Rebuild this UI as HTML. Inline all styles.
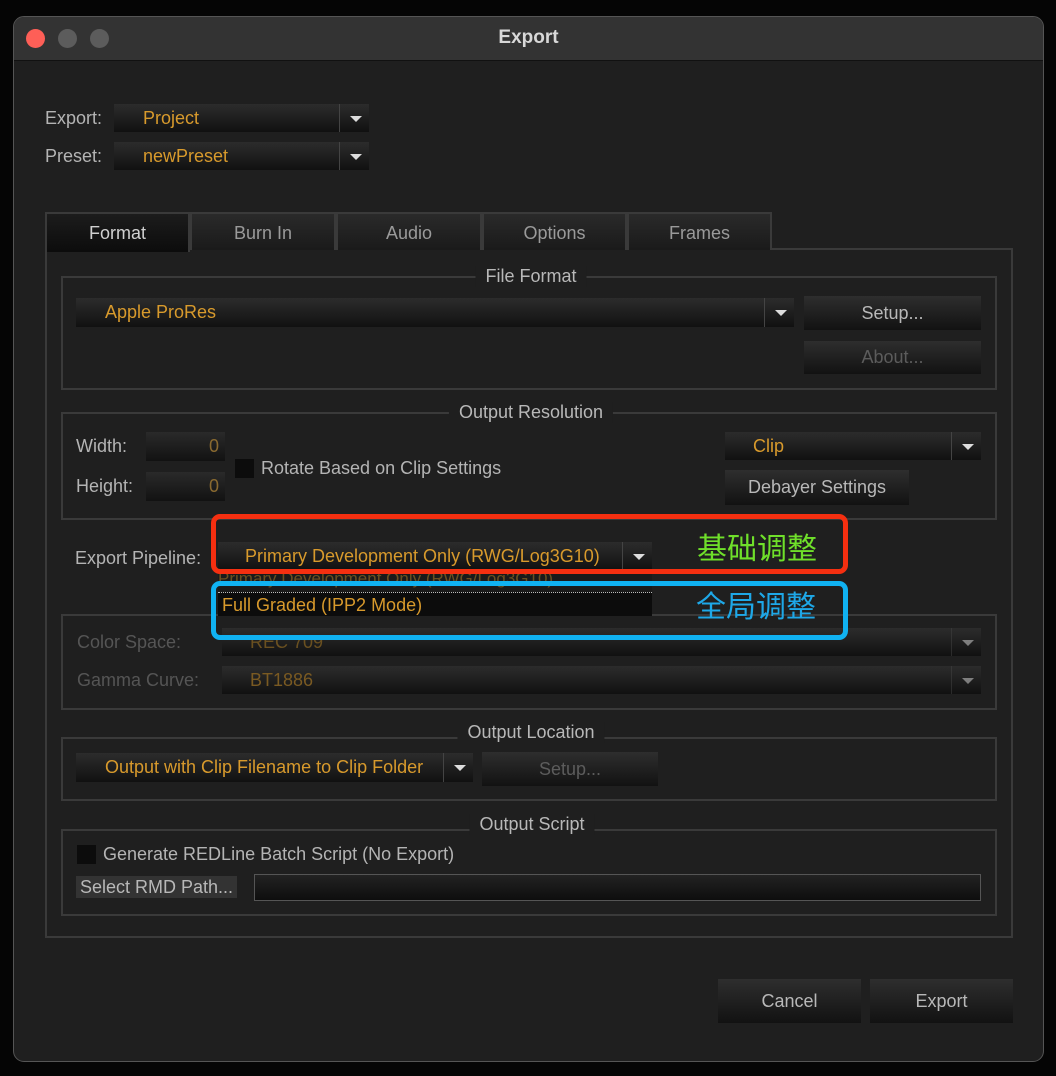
<!DOCTYPE html>
<html><head><meta charset="utf-8"><style>
*{box-sizing:border-box;margin:0;padding:0}
body{width:1056px;height:1076px;background:#050505;position:relative;overflow:hidden;font-family:"Liberation Sans","Noto Sans CJK SC",sans-serif;font-size:18px;color:#b4b4b4}
.a{position:absolute}
.win{left:13px;top:16px;width:1031px;height:1046px;background:#1f1f1f;border-radius:11px;border:1px solid #555;overflow:hidden}
.title{left:0;top:0;width:100%;height:44px;background:#333;border-bottom:1px solid #111;text-align:center;line-height:42px;font-weight:bold;color:#d8d8d8;font-size:19px}
.dot{width:19px;height:19px;border-radius:50%;top:12px}
.dd{background:linear-gradient(#2c2c2c,#111);color:#d89a2c;line-height:28px}
.dd .ar{position:absolute;right:0;top:0;bottom:0;width:30px;border-left:1px solid #444;background:linear-gradient(#2c2c2c,#111)}
.dd .ar:after{content:"";position:absolute;left:10px;top:12px;border-left:6px solid transparent;border-right:6px solid transparent;border-top:6px solid #ddd}
.btn{background:linear-gradient(#2e2e2e,#121212);color:#b8b8b8;text-align:center}
.grp{border:2px solid #3a3a3a}
.gt{background:#1f1f1f;padding:0 10px;color:#b8b8b8;transform:translateX(-50%)}
.tab{top:212px;height:38px;border:2px solid #3a3a3a;border-bottom:none;background:linear-gradient(#2a2a2a,#1a1a1a);text-align:center;line-height:38px;color:#9a9a9a}
.inp{background:linear-gradient(#2a2a2a,#121212);color:#8a6a30;text-align:right;padding-right:6px;line-height:29px}
.cb{background:#0c0c0c;width:19px;height:19px}
</style></head><body>
<div class="a win">
 <div class="a title">Export</div>
 <div class="a dot" style="left:12px;background:#fe5f57"></div>
 <div class="a dot" style="left:44px;background:#5c5c5c"></div>
 <div class="a dot" style="left:76px;background:#5c5c5c"></div>
</div>
<div class="a" style="left:45px;top:108px">Export:</div>
<div class="a dd" style="left:114px;top:104px;width:255px;height:28px;padding-left:29px">Project<div class="ar"></div></div>
<div class="a" style="left:45px;top:146px">Preset:</div>
<div class="a dd" style="left:114px;top:142px;width:255px;height:28px;padding-left:29px">newPreset<div class="ar"></div></div>

<div class="a grp" style="left:45px;top:248px;width:968px;height:690px"></div>
<div class="a tab" style="left:45px;width:145px;background:linear-gradient(#1c1c1c,#0c0c0c);color:#d0d0d0;height:40px">Format</div>
<div class="a tab" style="left:190px;width:146px">Burn In</div>
<div class="a tab" style="left:336px;width:146px">Audio</div>
<div class="a tab" style="left:482px;width:145px">Options</div>
<div class="a tab" style="left:627px;width:145px">Frames</div>

<div class="a grp" style="left:61px;top:276px;width:936px;height:114px"></div>
<div class="a gt" style="left:531px;top:266px">File Format</div>
<div class="a dd" style="left:76px;top:298px;width:718px;height:29px;padding-left:29px">Apple ProRes<div class="ar"></div></div>
<div class="a btn" style="left:804px;top:296px;width:177px;height:34px;line-height:34px">Setup...</div>
<div class="a btn" style="left:804px;top:341px;width:177px;height:33px;line-height:33px;color:#5c5c5c">About...</div>

<div class="a grp" style="left:61px;top:412px;width:936px;height:108px"></div>
<div class="a gt" style="left:531px;top:402px">Output Resolution</div>
<div class="a" style="left:76px;top:436px">Width:</div>
<div class="a inp" style="left:146px;top:432px;width:79px;height:29px">0</div>
<div class="a" style="left:76px;top:476px">Height:</div>
<div class="a inp" style="left:146px;top:472px;width:79px;height:29px">0</div>
<div class="a cb" style="left:235px;top:459px"></div>
<div class="a" style="left:261px;top:458px">Rotate Based on Clip Settings</div>
<div class="a dd" style="left:725px;top:432px;width:256px;height:28px;padding-left:28px">Clip<div class="ar"></div></div>
<div class="a btn" style="left:725px;top:470px;width:184px;height:35px;line-height:35px">Debayer Settings</div>

<div class="a grp" style="left:61px;top:614px;width:936px;height:96px"></div>
<div class="a" style="left:77px;top:632px;color:#555">Color Space:</div>
<div class="a dd" style="left:222px;top:628px;width:759px;height:28px;padding-left:28px;color:#6a5020">REC 709<div class="ar" style="opacity:.5"></div></div>
<div class="a" style="left:77px;top:670px;color:#555">Gamma Curve:</div>
<div class="a dd" style="left:222px;top:666px;width:759px;height:28px;padding-left:28px;color:#7a5a22">BT1886<div class="ar" style="opacity:.5"></div></div>

<div class="a" style="left:75px;top:548px">Export Pipeline:</div>
<div class="a" style="left:218px;top:570px;width:434px;height:46px;background:#1a1a1a;border-bottom:1px solid #333"></div>
<div class="a" style="left:218px;top:574px;width:434px;height:16px;overflow:hidden;color:#6a5020;line-height:10px;font-size:17px">Primary Development Only (RWG/Log3G10)</div>
<div class="a" style="left:218px;top:592px;width:434px;height:24px;background:#0c0c0c;color:#d89a2c;line-height:24px;padding-left:4px;border-top:1px dotted #bbb">Full Graded (IPP2 Mode)</div>
<div class="a dd" style="left:218px;top:542px;width:434px;height:28px;padding-left:27px">Primary Development Only (RWG/Log3G10)<div class="ar"></div></div>

<div class="a" style="left:211px;top:514px;width:637px;height:60px;border:5px solid #f52f10;border-radius:9px"></div>
<div class="a" style="left:697px;top:532px;color:#6fe02a;font-size:30px;line-height:36px">基础调整</div>
<div class="a" style="left:211px;top:581px;width:637px;height:59px;border:5px solid #10b2f2;border-radius:9px"></div>
<div class="a" style="left:696px;top:590px;color:#1ea8e8;font-size:30px;line-height:36px">全局调整</div>

<div class="a grp" style="left:61px;top:737px;width:936px;height:64px"></div>
<div class="a gt" style="left:531px;top:722px">Output Location</div>
<div class="a dd" style="left:76px;top:753px;width:397px;height:29px;padding-left:29px">Output with Clip Filename to Clip Folder<div class="ar" style="width:30px"></div></div>
<div class="a btn" style="left:482px;top:752px;width:176px;height:34px;line-height:34px;color:#5c5c5c">Setup...</div>

<div class="a grp" style="left:61px;top:829px;width:936px;height:87px"></div>
<div class="a gt" style="left:532px;top:814px">Output Script</div>
<div class="a cb" style="left:77px;top:845px"></div>
<div class="a" style="left:103px;top:844px">Generate REDLine Batch Script (No Export)</div>
<div class="a btn" style="left:76px;top:876px;width:161px;height:22px;line-height:22px;background:#333">Select RMD Path...</div>
<div class="a" style="left:254px;top:874px;width:727px;height:27px;border:1px solid #555;background:linear-gradient(#222,#0e0e0e)"></div>

<div class="a btn" style="left:718px;top:979px;width:143px;height:44px;line-height:44px">Cancel</div>
<div class="a btn" style="left:870px;top:979px;width:143px;height:44px;line-height:44px">Export</div>
</body></html>
